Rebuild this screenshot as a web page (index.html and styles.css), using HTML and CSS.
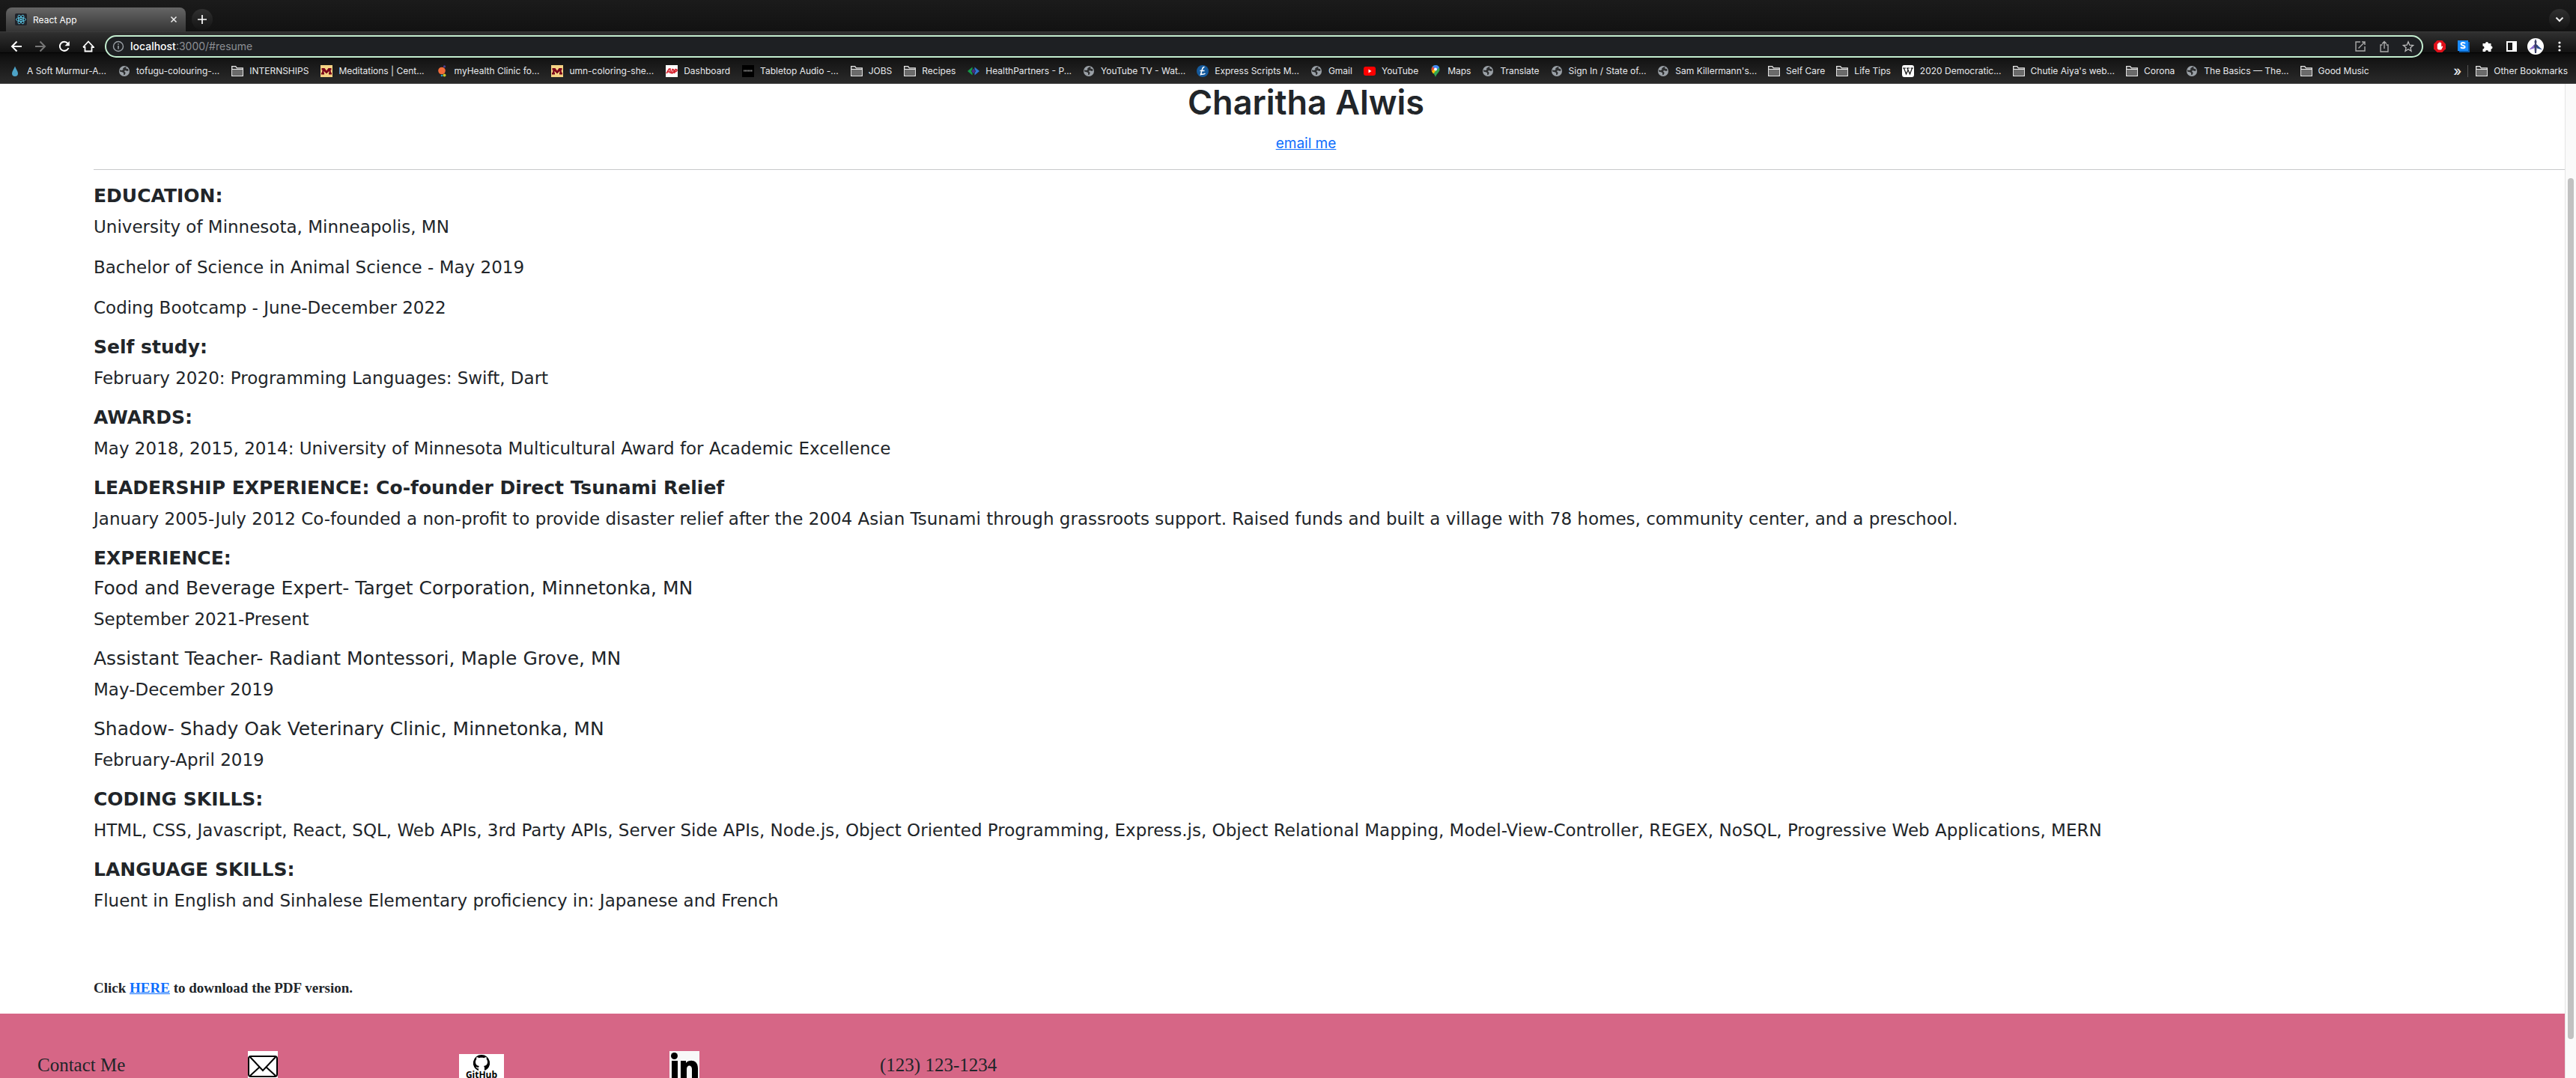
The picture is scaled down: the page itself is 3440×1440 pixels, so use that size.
FILE: index.html
```html
<!DOCTYPE html>
<html lang="en">
<head>
<meta charset="utf-8">
<title>React App</title>
<link rel="stylesheet" href="styles.css">
</head>
<body>
<svg class="sprite" aria-hidden="true">
  <symbol id="folder" viewBox="0 0 16 16"><path d="M.7 14.3V1.7h5l1.6 2.1h8v10.500z" fill="#2b2b2b" stroke="#e8e8e8" stroke-width="1.300"/><path d="M1.500 6h13v7.500h-13z" fill="#6b6b6b"/><path d="M1 5.500h14" stroke="#e8e8e8"/></symbol>
  <symbol id="globe" viewBox="0 0 16 16"><circle cx="8" cy="8" r="7" fill="#9aa0a6"/><path d="M8.500 2.500 6 4.500l.5 1.500-2 1-2.500-.5v2l3 .8 2 1 .2 3 1.500-.5 1-2.500-1.700-2 1-1.200 3 1 1.500-.5-.5-2.500-2-.3-1-1 1-1.500z" fill="#2c2d2e"/></symbol>
  <symbol id="maroon" viewBox="0 0 16 16"><path d="M0 0h16v16H0z" fill="#f5d384"/><path d="M1.500 4h4L8 7.500 10.500 4h4v2.500h-1l.5 3.500h1v2.500h-4V10h.7l-.3-2L8 11.500 4.600 8l-.3 2H5v2.500H1V10h1l.5-3.500h-1z" fill="#7a0019"/></symbol>
</svg>
<header class="browser">
  <div class="tabs">
    <div class="tab">
      <svg class="favicon" viewBox="0 0 16 16"><rect width="16" height="16" rx="2" fill="#20232a"/><g fill="none" stroke="#61dafb" stroke-width=".8"><ellipse cx="8" cy="8" rx="6.500" ry="2.500"/><ellipse cx="8" cy="8" rx="6.500" ry="2.500" transform="rotate(60 8 8)"/><ellipse cx="8" cy="8" rx="6.500" ry="2.500" transform="rotate(120 8 8)"/></g><circle cx="8" cy="8" r="1.200" fill="#61dafb"/></svg>
      <span class="tab-title">React App</span>
      <button class="close" aria-label="Close tab"><svg viewBox="0 0 10 10"><path d="m1.500 1.500 7 7m0-7-7 7" stroke="#eee" stroke-width="1.500"/></svg></button>
    </div>
    <button class="round" aria-label="New tab"><svg viewBox="0 0 12 12"><path d="M6 0v12M0 6h12" stroke="#fff" stroke-width="1.700"/></svg></button>
    <button class="round end" aria-label="Search tabs"><svg viewBox="0 0 12 12"><path d="m1.500 3.500 4.500 4.500 4.500-4.500" fill="none" stroke="#eee" stroke-width="2"/></svg></button>
  </div>
  <div class="toolbar">
    <div class="nav">
      <button aria-label="Back"><svg viewBox="0 0 16 16"><path d="M15 8H2m6.500-6.500L2 8l6.500 6.500" fill="none" stroke="#fff" stroke-width="2"/></svg></button>
      <button aria-label="Forward"><svg viewBox="0 0 16 16"><path d="M1 8h13M7.500 1.500 14 8l-6.500 6.500" fill="none" stroke="#777" stroke-width="2"/></svg></button>
      <button aria-label="Reload"><svg viewBox="0 0 16 16"><path d="M13.500 10A6 6 0 1 1 12.500 4" fill="none" stroke="#fff" stroke-width="2"/><path d="M14.800 1v6.300H8.500z" fill="#fff"/></svg></button>
      <button aria-label="Home"><svg viewBox="0 0 16 16"><path d="M3.500 8v6.500h9V8M1 9l7-7.500L15 9h-2.500M1 9h2.500" fill="none" stroke="#fff" stroke-width="1.800"/></svg></button>
    </div>
    <div class="address">
      <svg viewBox="0 0 16 16"><circle cx="8" cy="8" r="6.500" fill="none" stroke="#9aa0a6" stroke-width="1.400"/><path d="M8 7v4.500M8 4.200v1.600" stroke="#9aa0a6" stroke-width="1.600"/></svg>
      <p class="url"><b>localhost</b>:3000/#resume</p>
      <button aria-label="Open"><svg viewBox="0 0 16 16"><path d="M8 2H2v12h12V8M10 2h4v4M14 2 5.500 10.500" fill="none" stroke="#aaa" stroke-width="1.400"/></svg></button>
      <button aria-label="Share"><svg viewBox="0 0 16 16"><path d="M5.500 6H3v9h10V6h-2.500M8 11V1.500M5 4.500l3-3 3 3" fill="none" stroke="#aaa" stroke-width="1.400"/></svg></button>
      <button aria-label="Bookmark"><svg viewBox="0 0 16 16"><path d="m8 1.800 1.800 4.400 4.700.4-3.600 3.100 1.100 4.600L8 11.800l-4 2.500 1.100-4.600L1.500 6.600l4.700-.4z" fill="none" stroke="#bbb" stroke-width="1.300"/></svg></button>
    </div>
    <div class="extensions">
      <button aria-label="Ad blocker"><svg viewBox="0 0 16 16"><path d="M4.700 0h6.600L16 4.700v6.600L11.300 16H4.700L0 11.300V4.700z" fill="#e0101a"/><path d="M4.800 8.500V4.500h1.300V3.200h1.400v-.7h1.400v.7h1.300v5.300l1.300-1 .8.700-2.200 4.300H6.500L4.800 11z" fill="#fff"/></svg></button>
      <button aria-label="Reader"><svg viewBox="0 0 16 16"><path d="M2 2h14v14H2z" fill="#0b5aa8"/><path d="M0 0h14v14H0z" fill="#1a8cff"/><path d="M10 4.200C8.500 2.500 4.500 2.600 4.600 5c.1 2.200 5 1.400 5 3.600 0 2.200-4 2.200-5.600.4" fill="none" stroke="#fff" stroke-width="2"/></svg></button>
      <button aria-label="Extensions"><svg viewBox="0 0 16 16"><path d="M1.500 4H5a2 2 0 1 1 4 0h3.500v3.500a2 2 0 1 1 0 4V15H9a2 2 0 1 0-4 0H1.500v-3.500a2 2 0 1 0 0-4z" fill="#fff"/></svg></button>
      <button aria-label="Side panel"><svg viewBox="0 0 16 16"><path d="M1 1h14v14H1z" fill="#fff"/><path d="M3 3h6v10H3z" fill="#171717"/></svg></button>
      <button class="profile" aria-label="Profile"><svg viewBox="0 0 22 22"><circle cx="11" cy="11" r="11" fill="#fff"/><path d="m11 1 1.500 3.500L12 8l2 2-1.500 3-.5 7h-2l-.5-7L8 10l2-2-.5-3.500z" fill="#3b3f68"/><path d="m9.500 8.500-7.500 7 7-2z" fill="#8a6bd0"/><path d="m12.500 8.500 7.500 7-7-2z" fill="#2a4a8b"/></svg></button>
      <button class="more" aria-label="Menu"><svg viewBox="0 0 16 16"><g fill="#fff"><circle cx="8" cy="3" r="1.600"/><circle cx="8" cy="8" r="1.600"/><circle cx="8" cy="13" r="1.600"/></g></svg></button>
    </div>
  </div>
  <nav class="bookmarks" aria-label="Bookmarks">
    <a href="#b1"><svg viewBox="0 0 16 16"><path d="M8 1.500C9 5 12 8 12 11a4 4 0 0 1-8 0c0-3 3-6 4-9.500z" fill="#4da3c7"/></svg>A Soft Murmur-A...</a>
    <a href="#b2"><svg><use href="#globe"/></svg>tofugu-colouring-...</a>
    <a href="#b3"><svg><use href="#folder"/></svg>INTERNSHIPS</a>
    <a href="#b4"><svg><use href="#maroon"/></svg>Meditations | Cent...</a>
    <a href="#b5"><svg viewBox="0 0 16 16"><circle cx="7" cy="7.500" r="4.800" fill="#f26b3a"/><circle cx="10.500" cy="1.800" r="1.600" fill="#4b3f8f"/><circle cx="10.500" cy="13.500" r="2" fill="#c7c52c"/><circle cx="7" cy="14" r="1.300" fill="#1fa1c4"/></svg>myHealth Clinic fo...</a>
    <a href="#b6"><svg><use href="#maroon"/></svg>umn-coloring-she...</a>
    <a href="#b7"><svg viewBox="0 0 16 16"><path d="M0 0h16v16H0z" fill="#fff"/><path d="m1 11 3.500-6H6v6M2.500 9H6m1.500 2L9 5.500c3 0 2.500 5-1.500 5.500m4 0L13 5.500c3.500 0 2 3.500-1 3.500" fill="none" stroke="#d6202c" stroke-width="1.600"/></svg>Dashboard</a>
    <a href="#b8"><svg viewBox="0 0 16 16"><path d="M0 0h16v16H0z" fill="#000"/><path d="M2 7.500h12" stroke="#888" stroke-width="2" stroke-dasharray="1.500 .5"/></svg>Tabletop Audio -...</a>
    <a href="#b9"><svg><use href="#folder"/></svg>JOBS</a>
    <a href="#b10"><svg><use href="#folder"/></svg>Recipes</a>
    <a href="#b11"><svg viewBox="0 0 16 16"><path d="M6.500 2.500v3L5 8l1.500 2.500v3L0 8z" fill="#149a48"/><path d="M9.500 2.500v3L11 8l-1.500 2.500v3L16 8z" fill="#2f74d0"/><path d="m8 4.500 2.500 3.500L8 11.500 5.500 8z" fill="#4a2a86"/></svg>HealthPartners - P...</a>
    <a href="#b12"><svg><use href="#globe"/></svg>YouTube TV - Wat...</a>
    <a href="#b13"><svg viewBox="0 0 16 16"><circle cx="8" cy="8" r="8" fill="#155a9c"/><path d="M10.500 2.500C8 2 7.500 5 6.500 9L5.500 12.500c2-.8 3.500.8 6-1.500M4.500 7.500h6" fill="none" stroke="#fff" stroke-width="1.500"/></svg>Express Scripts M...</a>
    <a href="#b14"><svg><use href="#globe"/></svg>Gmail</a>
    <a href="#b15"><svg viewBox="0 0 16 16"><rect y="2" width="16" height="12" rx="3" fill="#f00"/><path d="m6.500 5.500 4 2.500-4 2.500z" fill="#fff"/></svg>YouTube</a>
    <a href="#b16"><svg viewBox="0 0 16 16"><path d="M8 0a5.500 5.500 0 0 1 5.500 5.500C13.500 9.500 9.500 11 8 16 6.500 11 2.500 9.500 2.500 5.500A5.500 5.500 0 0 1 8 0z" fill="#34a853"/><path d="M8 0a5.500 5.500 0 0 1 5 3L8 8 4 2C5 .7 6.500 0 8 0z" fill="#4285f4"/><path d="M4 2 7 4.500 3 8.500C2.300 6 2.500 3.800 4 2z" fill="#ea4335"/><path d="M8 8 5 11.500 3 8.500l3-3.500z" fill="#fbbc04"/><circle cx="8" cy="5.500" r="2" fill="#fff"/></svg>Maps</a>
    <a href="#b17"><svg><use href="#globe"/></svg>Translate</a>
    <a href="#b18"><svg><use href="#globe"/></svg>Sign In / State of...</a>
    <a href="#b19"><svg><use href="#globe"/></svg>Sam Killermann's...</a>
    <a href="#b20"><svg><use href="#folder"/></svg>Self Care</a>
    <a href="#b21"><svg><use href="#folder"/></svg>Life Tips</a>
    <a href="#b22"><svg viewBox="0 0 16 16"><rect width="16" height="16" rx="3" fill="#fff"/><path d="M1 4h4M6 4h4M11.500 4H15M2.500 4l3 8L8 6.500M7 4l3.500 8L13.500 4" fill="none" stroke="#111" stroke-width="1.200"/></svg>2020 Democratic...</a>
    <a href="#b23"><svg><use href="#folder"/></svg>Chutie Aiya's web...</a>
    <a href="#b24"><svg><use href="#folder"/></svg>Corona</a>
    <a href="#b25"><svg><use href="#globe"/></svg>The Basics — The...</a>
    <a href="#b26"><svg><use href="#folder"/></svg>Good Music</a>
    <button class="overflow" aria-label="More bookmarks">»</button>
    <a class="other" href="#other"><svg><use href="#folder"/></svg>Other Bookmarks</a>
  </nav>
</header>
<div class="viewport">
  <div class="page">
    <main class="resume">
      <header class="intro">
        <h1>Charitha Alwis</h1>
        <a href="#email">email me</a>
      </header>
      <hr>
      <h2>EDUCATION:</h2>
      <p>University of Minnesota, Minneapolis, MN</p>
      <p>Bachelor of Science in Animal Science - May 2019</p>
      <p>Coding Bootcamp - June-December 2022</p>
      <h2>Self study:</h2>
      <p>February 2020: Programming Languages: Swift, Dart</p>
      <h2>AWARDS:</h2>
      <p>May 2018, 2015, 2014: University of Minnesota Multicultural Award for Academic Excellence</p>
      <h2>LEADERSHIP EXPERIENCE: Co-founder Direct Tsunami Relief</h2>
      <p>January 2005-July 2012 Co-founded a non-profit to provide disaster relief after the 2004 Asian Tsunami through grassroots support. Raised funds and built a village with 78 homes, community center, and a preschool.</p>
      <h2>EXPERIENCE:</h2>
      <h3>Food and Beverage Expert- Target Corporation, Minnetonka, MN</h3>
      <p>September 2021-Present</p>
      <h3>Assistant Teacher- Radiant Montessori, Maple Grove, MN</h3>
      <p>May-December 2019</p>
      <h3>Shadow- Shady Oak Veterinary Clinic, Minnetonka, MN</h3>
      <p>February-April 2019</p>
      <h2>CODING SKILLS:</h2>
      <p>HTML, CSS, Javascript, React, SQL, Web APIs, 3rd Party APIs, Server Side APIs, Node.js, Object Oriented Programming, Express.js, Object Relational Mapping, Model-View-Controller, REGEX, NoSQL, Progressive Web Applications, MERN</p>
      <h2>LANGUAGE SKILLS:</h2>
      <p>Fluent in English and Sinhalese Elementary proficiency in: Japanese and French</p>
      <h4>Click <a href="#pdf">HERE</a> to download the PDF version.</h4>
    </main>
    <footer class="contact">
      <span>Contact Me</span>
      <a href="#mail" aria-label="Email"><svg width="40" height="40" viewBox="0 0 40 40"><path d="M0 0h40v40H0z" fill="#fff"/><rect x="1" y="7" width="38" height="27" rx="3" fill="none" stroke="#000" stroke-width="2"/><path d="m3 8 17 18L37 8M3 33l13-12m21 12L24 21" fill="none" stroke="#000" stroke-width="2"/></svg></a>
      <a href="#github" aria-label="GitHub"><svg width="60" height="36" viewBox="0 0 60 36"><path d="M0 0h60v36H0z" fill="#fff"/><path d="M30 1a11 11 0 0 0-4 21.300v-3c-2 .3-3-1-3.500-2.300 1.500 0 2 1.500 3.500 1 .2-1 .5-1.600 1-2-3-.5-5-2-5-5.500 0-1.500.5-2.700 1.300-3.600-.3-1 0-2.300.3-3 1.300 0 2.400.8 3.200 1.300 2-.5 4.400-.5 6.400 0 .8-.5 1.900-1.300 3.200-1.300.3.700.6 2 .3 3 .8.900 1.300 2.100 1.300 3.600 0 3.500-2 5-5 5.500.6.600 1 1.500 1 2.800v3.500A11 11 0 0 0 30 1z"/><text x="30" y="32" text-anchor="middle" class="logo-text">GitHub</text></svg></a>
      <a href="#linkedin" aria-label="LinkedIn"><svg width="40" height="40" viewBox="0 0 40 40"><path d="M0 0h40v40H0z" fill="#f8f8f8"/><circle cx="6.500" cy="6.500" r="4.500"/><path d="M3 13h8v27H3zM15 13h7v3c4-5 16-5 16 7v17h-8V24c0-6-7-6-7 0v16h-8z"/></svg></a>
      <span>(123) 123-1234</span>
    </footer>
  </div>
  <div class="scrollbar"><div class="thumb"></div></div>
</div>
</body>
</html>
```
FILE: styles.css
```css
* { box-sizing: border-box; }

body {
  margin: 0;
  height: 100vh;
  display: flex;
  flex-direction: column;
  overflow: hidden;
  color: #212529;
  background: #fff;
  font-family: "DejaVu Sans", Verdana, sans-serif;
}

.sprite { display: none; }

button {
  border: 0;
  padding: 0;
  background: none;
  color: inherit;
  display: grid;
  place-items: center;
}

.browser {
  flex: none;
  color: #e8eaed;
  background: #141414;
  font-family: Inter, sans-serif;
  font-size: 12px;
}

/* Tab strip */
.tabs {
  height: 42px;
  padding: 10px 8px 0;
  display: flex;
  gap: 8px;
  background: linear-gradient(#1b1b1b, #121212);
}
.tab {
  width: 240px;
  padding: 0 11px 0 12px;
  display: flex;
  align-items: center;
  gap: 8px;
  border-radius: 8px 8px 0 0;
  background: linear-gradient(#656565, #353535);
}
.favicon { width: 16px; height: 16px; }
.tab-title { flex: 1; color: #fff; }
.close svg { width: 10px; height: 10px; display: block; }
.round {
  width: 28px;
  height: 28px;
  margin-top: 2px;
  border-radius: 50%;
  background: linear-gradient(#303030, #141414);
}
.round svg { width: 12px; height: 12px; }
.end { margin-left: auto; }

/* Toolbar */
.toolbar {
  height: 36px;
  padding: 2px 14px 0;
  display: flex;
  align-items: center;
  gap: 14px;
  border-top: 1px solid #3a3a3a;
  background: linear-gradient(#303030, #121212 76%, #000 78%, #0c0c0c 80%, #131313);
}
.nav { display: flex; gap: 16px; }
.nav svg, .extensions svg, .address svg { width: 16px; height: 16px; display: block; }
.address {
  flex: 1;
  height: 30px;
  padding: 0 10px 0 8px;
  display: flex;
  align-items: center;
  gap: 16px;
  border: 2px solid #c4eed0;
  border-radius: 15px;
  background: #1e2023;
}
.url { flex: 1; margin: 0 0 0 -8px; color: #8c8f93; font-size: 14px; }
.url b { color: #fff; font-weight: 500; }
.extensions { display: flex; align-items: center; gap: 16px; }
.extensions .profile { margin: 0 -3px; }
.extensions .profile svg { width: 22px; height: 22px; }

/* Bookmarks */
.bookmarks {
  height: 34px;
  padding: 0 11px 0 12px;
  display: flex;
  align-items: center;
  gap: 16px;
  white-space: nowrap;
  border-bottom: 1px solid #3d3d3d;
  background: linear-gradient(#131313, #2a2a2a);
}
.bookmarks a {
  display: flex;
  align-items: center;
  gap: 8px;
  color: inherit;
  text-decoration: none;
}
.bookmarks a:nth-of-type(n + 12) { margin-left: -1px; }
.bookmarks svg { width: 16px; height: 16px; flex: none; }
.overflow { margin-left: auto; font: 500 18px Inter, sans-serif; }
.bookmarks a.other { margin-left: -8px; padding-left: 10px; border-left: 1px solid #555; }

/* Web page */
.viewport { flex: 1; min-height: 0; display: flex; }
.page { flex: 1; overflow: hidden; }
.resume { padding-left: 125px; }
.resume a { color: #0d6efd; }
.intro {
  padding-right: 62px;
  text-align: center;
  font: 19px/28px Inter, sans-serif;
}
.intro h1 { margin: 0; padding-bottom: 16px; font-size: 45px; font-weight: 600; line-height: 50px; }
hr { margin: 20px 0 18px; border: 0; border-top: 1px solid #c8c9ca; }
.resume h2, .resume h3 { margin: 0 0 6px; font-size: 25px; line-height: 34px; }
.resume h3 { font-weight: 400; }
.resume p { margin: 0 0 17px; font-size: 23px; line-height: 37px; }
.resume h4 {
  margin: 0;
  padding: 69px 0 22px;
  font: 700 19px/24px "Liberation Serif", serif;
}

.contact {
  height: 160px;
  padding: 50px 0 0 50px;
  display: grid;
  grid-template-columns: repeat(12, 1fr);
  align-items: start;
  align-content: start;
  background: #d66686;
  font: 25px/37px "Liberation Serif", serif;
}
.contact a { align-self: end; }
.contact svg { display: block; }
.logo-text { font: 700 12px "Open Sans", sans-serif; }

/* Scrollbar */
.scrollbar { width: 15px; padding: 126px 3px 52px; border-left: 1px solid #e4e4e4; background: #fafafa; }
.thumb { height: 100%; border-radius: 4px; background: #c1c1c1; }
```
